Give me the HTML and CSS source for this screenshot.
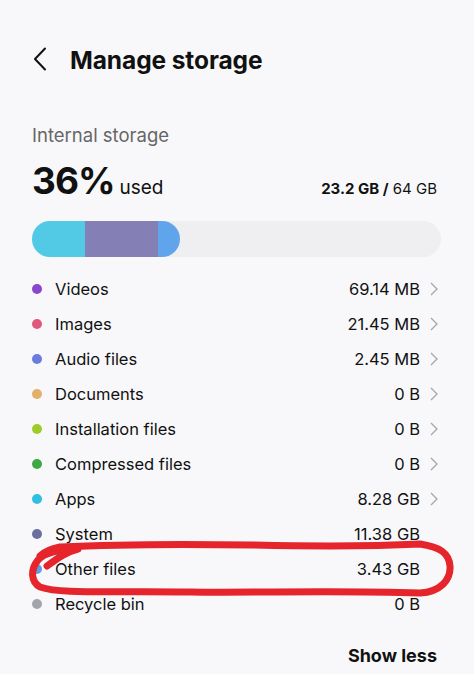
FILE: index.html
```html
<!DOCTYPE html>
<html>
<head>
<meta charset="utf-8">
<link rel="stylesheet" href="styles.css">
</head>
<body>
<div class="page">
  <header class="header">
    <svg class="back" width="14" height="24" viewBox="0 0 14 24"><path d="M12 1.5 L2 12 L12 22.5" fill="none" stroke="#111" stroke-width="2" stroke-linecap="round" stroke-linejoin="round"/></svg>
    <h1 class="title">Manage storage</h1>
  </header>

  <div class="section-label">Internal storage</div>

  <div class="usage">
    <div class="percent"><span class="big">36%</span><span class="used">used</span></div>
    <div class="amount"><b>23.2 GB /</b> 64 GB</div>
  </div>

  <div class="bar">
    <div class="seg seg-apps"></div>
    <div class="seg seg-system"></div>
    <div class="seg seg-other"></div>
  </div>

  <ul class="list">
    <li class="row"><span class="dot" style="background:#8a46cc"></span><span class="name">Videos</span><span class="val">69.14 MB</span><span class="chev"><svg width="8" height="14" viewBox="0 0 8 14"><path d="M1 1 L7 7 L1 13" fill="none" stroke="#a6a6aa" stroke-width="1.3"/></svg></span></li>
    <li class="row"><span class="dot" style="background:#e0587c"></span><span class="name">Images</span><span class="val">21.45 MB</span><span class="chev"><svg width="8" height="14" viewBox="0 0 8 14"><path d="M1 1 L7 7 L1 13" fill="none" stroke="#a6a6aa" stroke-width="1.3"/></svg></span></li>
    <li class="row"><span class="dot" style="background:#6a7ce0"></span><span class="name">Audio files</span><span class="val">2.45 MB</span><span class="chev"><svg width="8" height="14" viewBox="0 0 8 14"><path d="M1 1 L7 7 L1 13" fill="none" stroke="#a6a6aa" stroke-width="1.3"/></svg></span></li>
    <li class="row"><span class="dot" style="background:#e2b069"></span><span class="name">Documents</span><span class="val">0 B</span><span class="chev"><svg width="8" height="14" viewBox="0 0 8 14"><path d="M1 1 L7 7 L1 13" fill="none" stroke="#a6a6aa" stroke-width="1.3"/></svg></span></li>
    <li class="row"><span class="dot" style="background:#9ccc2a"></span><span class="name">Installation files</span><span class="val">0 B</span><span class="chev"><svg width="8" height="14" viewBox="0 0 8 14"><path d="M1 1 L7 7 L1 13" fill="none" stroke="#a6a6aa" stroke-width="1.3"/></svg></span></li>
    <li class="row"><span class="dot" style="background:#3ea844"></span><span class="name">Compressed files</span><span class="val">0 B</span><span class="chev"><svg width="8" height="14" viewBox="0 0 8 14"><path d="M1 1 L7 7 L1 13" fill="none" stroke="#a6a6aa" stroke-width="1.3"/></svg></span></li>
    <li class="row"><span class="dot" style="background:#2fbfe0"></span><span class="name">Apps</span><span class="val">8.28 GB</span><span class="chev"><svg width="8" height="14" viewBox="0 0 8 14"><path d="M1 1 L7 7 L1 13" fill="none" stroke="#a6a6aa" stroke-width="1.3"/></svg></span></li>
    <li class="row"><span class="dot" style="background:#6b6e9e"></span><span class="name">System</span><span class="val">11.38 GB</span><span class="chev"></span></li>
    <li class="row"><span class="dot" style="background:#5c9ee6"></span><span class="name">Other files</span><span class="val">3.43 GB</span><span class="chev"></span></li>
    <li class="row"><span class="dot" style="background:#a4a5ac"></span><span class="name">Recycle bin</span><span class="val">0 B</span><span class="chev"></span></li>
  </ul>

  <div class="footer"><span class="show-less">Show less</span></div>

  <svg class="scribble" width="474" height="674" viewBox="0 0 474 674">
    <path d="M47 566 C58 558 66 552 78 549 C60 549 44 553 38 560 C30 570 31 582 40 587 C60 594 100 591 190 592 C260 593 330 590 420 593 C440 592 451 580 450 566 C449 553 440 547 420 544 C380 546 340 547 253 545 C190 544 120 544 60 547 C50 549 44 552 40 556" fill="none" stroke="#e5242c" stroke-width="7" stroke-linecap="round" stroke-linejoin="round"/>
  </svg>
</div>
</body>
</html>
```

FILE: styles.css
```css
* { box-sizing: border-box; }
html, body { margin: 0; padding: 0; }
body {
  background: #f8f8fa;
  font-family: "Inter", "Noto Sans", sans-serif;
  color: #111;
  width: 474px;
  height: 674px;
  overflow: hidden;
}
.page {
  position: relative;
  padding: 30px 33px 0 32px;
  height: 674px;
}
.header {
  display: flex;
  align-items: center;
  height: 60px;
  gap: 23px;
  padding-left: 1px;
}
.back { flex: none; margin-top: -2px; }
.title {
  margin: 0;
  font-size: 24.5px;
  font-weight: 700;
  letter-spacing: -0.1px;
}
.section-label {
  margin-top: 33px;
  font-size: 18.5px;
  color: #666;
  line-height: 24px;
}
.usage {
  display: flex;
  justify-content: space-between;
  align-items: baseline;
  margin-top: 11px;
  height: 44px;
}
.percent { display: flex; align-items: baseline; gap: 5px; }
.big { font-size: 37px; font-weight: 700; letter-spacing: -1px; }
.used { font-size: 19px; }
.amount { font-size: 15px; padding-right: 4px; }
.amount b { font-weight: 700; }
.bar {
  margin-top: 19px;
  height: 36px;
  border-radius: 18px;
  background: #efeff1;
  display: flex;
  overflow: hidden;
}
.seg { height: 100%; }
.seg-apps { width: 53px; background: #52cae6; }
.seg-system { width: 73px; background: #8480b5; }
.seg-other { width: 22px; background: #60a4ec; border-radius: 0 18px 18px 0; }
.list {
  list-style: none;
  margin: 14px 0 0;
  padding: 0;
}
.row {
  display: flex;
  align-items: center;
  height: 35px;
  font-size: 16.5px;
}
.dot {
  width: 10px;
  height: 10px;
  border-radius: 50%;
  flex: none;
}
.name { margin-left: 13px; flex: 1; }
.val { text-align: right; }
.chev {
  width: 21px;
  flex: none;
  display: flex;
  justify-content: flex-end;
  padding-right: 3px;
}
.footer {
  display: flex;
  justify-content: flex-end;
  margin-top: 24px;
  padding-right: 4px;
}
.show-less { font-size: 18px; font-weight: 700; }
.scribble {
  position: absolute;
  left: 0;
  top: 0;
  pointer-events: none;
}
```
